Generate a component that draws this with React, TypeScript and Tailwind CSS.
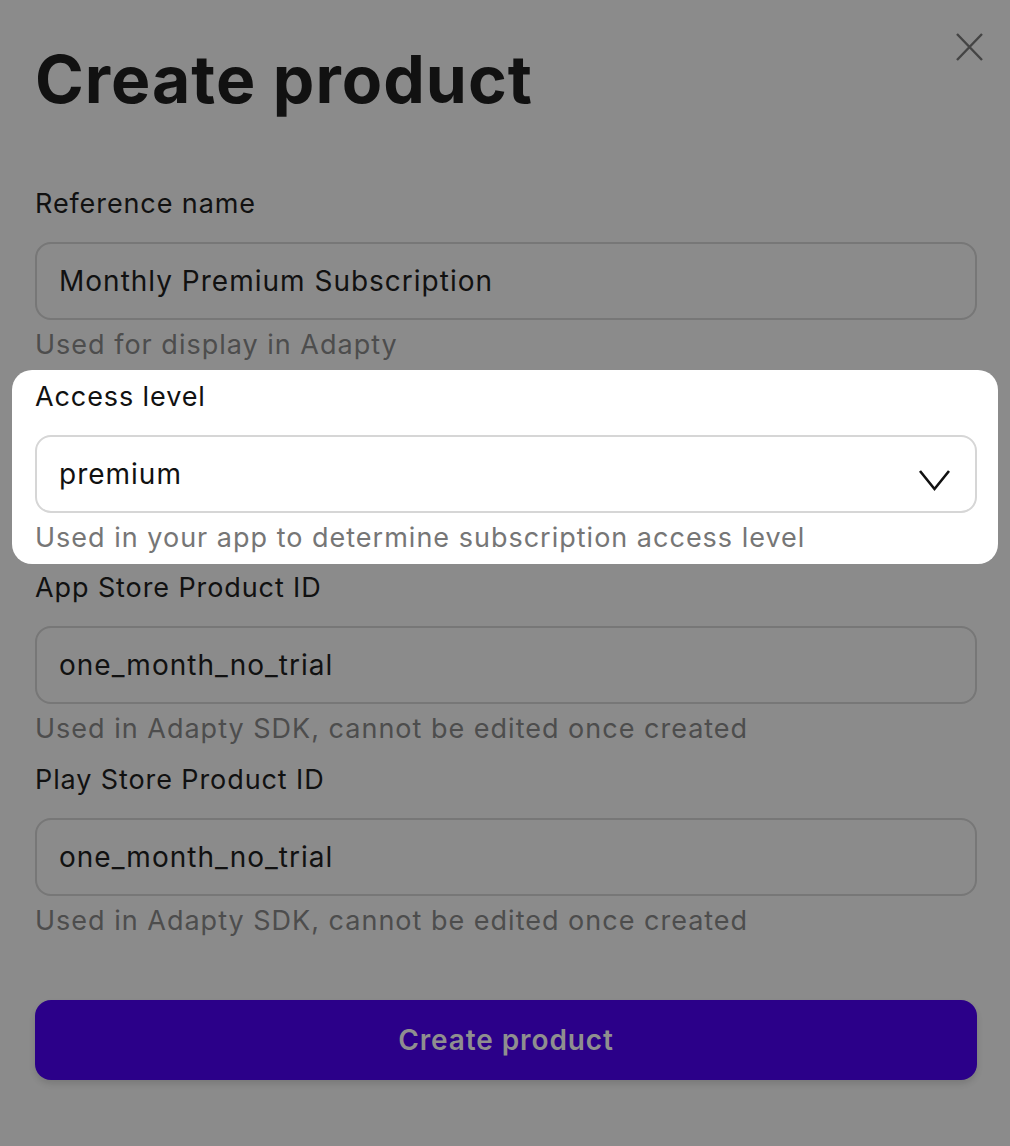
import { ReactNode } from "react";

type FieldProps = {
  label: string;
  value: string;
  hint: string;
  dim?: boolean;
  trailing?: ReactNode;
};

const Field = ({ label, value, hint, dim = true, trailing }: FieldProps) => (
  <div className="flex flex-col">
    <p className="h-[36px] leading-[36px] text-[27px] text-[#111111] tracking-[0.9px]">{label}</p>
    <div
      className={
        "mt-[20px] h-[78px] rounded-[16px] border-2 flex items-center justify-between pl-[22px] pr-[24px] " +
        (dim ? "border-[#777777]" : "border-[#d6d6d6] bg-white")
      }
    >
      <span className="text-[28px] text-[#111111] tracking-[1px]">{value}</span>
      {trailing}
    </div>
    <p
      className={
        "mt-[7px] h-[36px] leading-[36px] text-[27px] tracking-[1px] " +
        (dim ? "text-[#4d4d4d]" : "text-[#767676]")
      }
    >
      {hint}
    </p>
  </div>
);

const Chevron = () => (
  <svg width="33" height="24" viewBox="0 0 33 24" fill="none" className="mt-[12px]">
    <path d="M2 3 L16.5 21 L31 3" stroke="#111111" strokeWidth="2.6" strokeLinejoin="miter" />
  </svg>
);

export default function App() {
  return (
    <div
      className="w-[1010px] h-[1146px] bg-[#8b8b8b] pl-[35px] pr-[33px] pt-[37px] flex flex-col"
      style={{ fontFamily: "Inter, 'Noto Sans', sans-serif" }}
    >
      <div className="flex items-start justify-between">
        <h1 className="h-[84px] leading-[84px] text-[66px] font-bold text-[#111111] tracking-[1px]">
          Create product
        </h1>
        <button className="mt-[-4px] mr-[-6px]" aria-label="Close">
          <svg width="27" height="28" viewBox="0 0 27 28" fill="none">
            <path d="M1 1 L26 27 M26 1 L1 27" stroke="#444444" strokeWidth="2.4" />
          </svg>
        </button>
      </div>

      <div className="mt-[65px] flex flex-col">
        <Field
          label="Reference name"
          value="Monthly Premium Subscription"
          hint="Used for display in Adapty"
        />

        <div className="mt-[7px] -ml-[23px] -mr-[21px] pl-[23px] pr-[21px] pt-[9px] pb-[8px] bg-white rounded-[20px]">
          <Field
            label="Access level"
            value="premium"
            hint="Used in your app to determine subscription access level"
            dim={false}
            trailing={<Chevron />}
          />
        </div>

        <div className="mt-[6px]">
          <Field
            label="App Store Product ID"
            value="one_month_no_trial"
            hint="Used in Adapty SDK, cannot be edited once created"
          />
        </div>

        <div className="mt-[15px]">
          <Field
            label="Play Store Product ID"
            value="one_month_no_trial"
            hint="Used in Adapty SDK, cannot be edited once created"
          />
        </div>
      </div>

      <button className="mt-[61px] h-[80px] w-full rounded-[16px] bg-[#2b0089] shadow-[0_4px_6px_rgba(0,0,0,0.12)] text-[28px] font-semibold text-[#8f8f8f] tracking-[0.9px]">
        Create product
      </button>
    </div>
  );
}
